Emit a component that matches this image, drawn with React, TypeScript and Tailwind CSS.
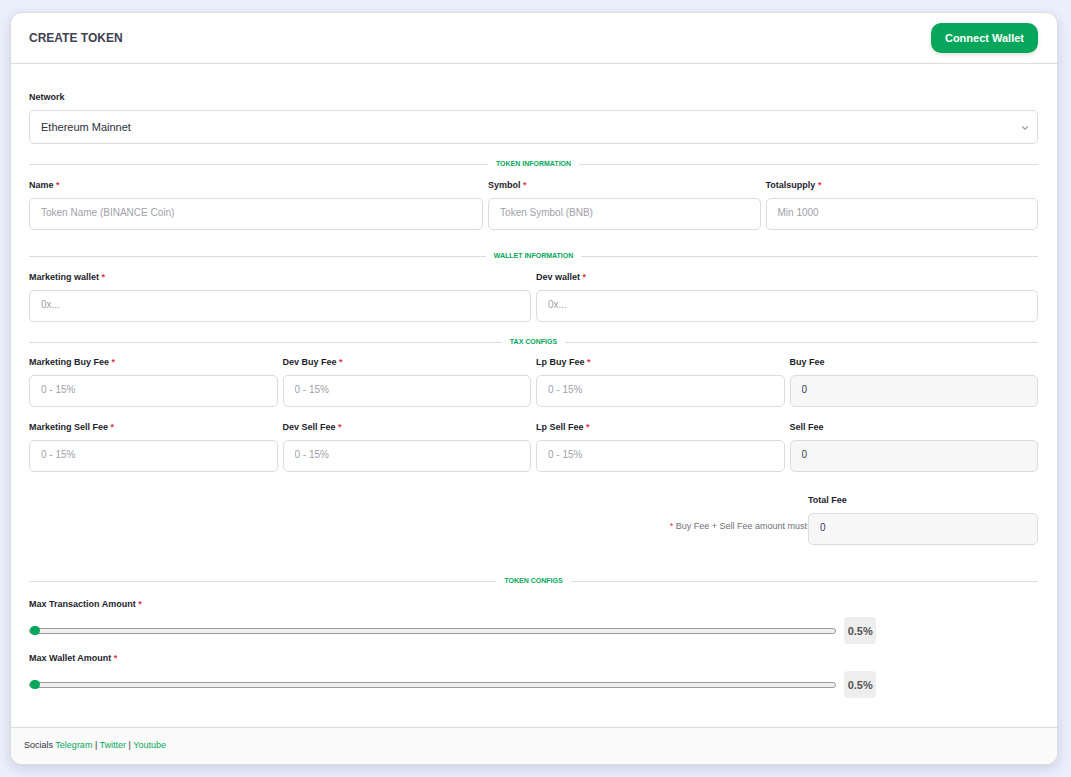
import { useState } from 'react'
import type { ReactNode } from 'react'
import { ChevronDown } from 'lucide-react'

interface FieldProps {
  id: string
  label: string
  placeholder?: string
  required?: boolean
  value?: string
}

function FieldLabel({ id, required, children }: { id: string; required?: boolean; children: ReactNode }) {
  return (
    <label htmlFor={id} className="block mb-1.5 text-[9px] leading-[14px] font-bold text-[#1e1e2d]">
      {children}
      {required && <span className="text-[#dc3545]"> *</span>}
    </label>
  )
}

function Field({ id, label, placeholder, required = true, value }: FieldProps) {
  const readOnly = value !== undefined

  return (
    <div className="min-w-0">
      <FieldLabel id={id} required={required}>{label}</FieldLabel>
      <input
        id={id}
        type="text"
        placeholder={placeholder}
        defaultValue={value}
        readOnly={readOnly}
        className={
          readOnly
            ? 'block w-full h-8 px-[11px] pb-[3px] rounded-[5px] border border-[#dcdcdd] bg-[#f7f7f7] text-[10px] text-[#3b3b46] outline-none'
            : 'block w-full h-8 px-[11px] pb-[3px] rounded-[5px] border border-[#dcdcdd] bg-white text-[10px] text-[#3b3b46] placeholder:text-[#a1a1aa] outline-none focus:border-[#06a75b]'
        }
      />
    </div>
  )
}

function SectionDivider({ title }: { title: string }) {
  return (
    <div className="flex items-center gap-2">
      <div className="h-px flex-1 bg-[#dcdddd]" />
      <h2 className="text-[7px] leading-[10px] font-bold text-[#06a75b] uppercase">{title}</h2>
      <div className="h-px flex-1 bg-[#dcdddd]" />
    </div>
  )
}

function PercentSlider({ id, label }: { id: string; label: string }) {
  const [value, setValue] = useState(0.5)

  return (
    <div>
      <FieldLabel id={id} required>{label}</FieldLabel>
      <div className="flex items-center gap-2">
        <input
          id={id}
          type="range"
          min={0.5}
          max={100}
          step={0.5}
          value={value}
          onChange={(e) => setValue(Number(e.target.value))}
          className="w-4/5 h-1.5 appearance-none rounded-full border border-[#9c9c9c] bg-[#efefef] [&::-webkit-slider-thumb]:appearance-none [&::-webkit-slider-thumb]:w-[10px] [&::-webkit-slider-thumb]:h-[9px] [&::-webkit-slider-thumb]:rounded-full [&::-webkit-slider-thumb]:bg-[#06a75b]"
        />
        <output
          htmlFor={id}
          className="min-w-8 px-[3px] pt-px rounded-[4px] bg-[#eeeeee] text-center text-[11px] leading-[26px] font-bold text-[#555555]"
        >
          {value}%
        </output>
      </div>
    </div>
  )
}

export default function App() {
  return (
    <div className="min-h-screen overflow-hidden bg-[#ebeefb] pl-2.5 pr-[13px] pt-3 pb-3 font-['Liberation_Sans',Arial,sans-serif]">
      <main className="overflow-hidden rounded-xl border border-[#dcdddd] bg-white shadow-[0_4px_12px_rgba(40,40,90,0.15)]">
        <header className="flex items-center justify-between border-b border-[#dcdddd] pl-[18px] pr-[19px] py-2.5">
          <h1 className="text-xs font-bold text-[#3f4254]">CREATE TOKEN</h1>
          <button
            type="button"
            className="h-[30px] px-3.5 rounded-[10px] bg-[#06a75b] text-[11px] font-bold text-white shadow-[0_2px_4px_rgba(0,0,0,0.12)]"
          >
            Connect Wallet
          </button>
        </header>

        <form className="pl-[18px] pr-[19px] pt-[26px] pb-[29px]">
          <div>
            <FieldLabel id="network">Network</FieldLabel>
            <div className="relative">
              <select
                id="network"
                className="block w-full h-[34px] appearance-none rounded-[5px] border border-[#dcdcdd] bg-white px-[11px] text-[11px] text-[#2f2f38] outline-none"
              >
                <option>Ethereum Mainnet</option>
              </select>
              <ChevronDown
                className="pointer-events-none absolute right-2 top-[13px] w-2.5 h-2.5 text-[#a3a3a8]"
                strokeWidth={3}
              />
            </div>
          </div>

          {/* Token information */}
          <div className="mt-[15px]">
            <SectionDivider title="Token Information" />
            <div className="mt-[9px] grid grid-cols-[5fr_3fr_3fr] gap-[5px]">
              <Field id="name" label="Name" placeholder="Token Name (BINANCE Coin)" />
              <Field id="symbol" label="Symbol" placeholder="Token Symbol (BNB)" />
              <Field id="totalsupply" label="Totalsupply" placeholder="Min 1000" />
            </div>
          </div>

          {/* Wallet information */}
          <div className="mt-[21px]">
            <SectionDivider title="Wallet Information" />
            <div className="mt-[9px] grid grid-cols-2 gap-[5px]">
              <Field id="marketing-wallet" label="Marketing wallet" placeholder="0x..." />
              <Field id="dev-wallet" label="Dev wallet" placeholder="0x..." />
            </div>
          </div>

          {/* Tax configs */}
          <div className="mt-[15px]">
            <SectionDivider title="Tax Configs" />
            <div className="mt-2 grid grid-cols-4 gap-x-[5px] gap-y-[13px]">
              <Field id="marketing-buy-fee" label="Marketing Buy Fee" placeholder="0 - 15%" />
              <Field id="dev-buy-fee" label="Dev Buy Fee" placeholder="0 - 15%" />
              <Field id="lp-buy-fee" label="Lp Buy Fee" placeholder="0 - 15%" />
              <Field id="buy-fee" label="Buy Fee" required={false} value="0" />
              <Field id="marketing-sell-fee" label="Marketing Sell Fee" placeholder="0 - 15%" />
              <Field id="dev-sell-fee" label="Dev Sell Fee" placeholder="0 - 15%" />
              <Field id="lp-sell-fee" label="Lp Sell Fee" placeholder="0 - 15%" />
              <Field id="sell-fee" label="Sell Fee" required={false} value="0" />
            </div>
            <div className="mt-[21px] flex items-end justify-end">
              <p className="mr-px pb-3 text-[9px] leading-[14px] text-[#6f6f76]">
                <span className="text-[#dc3545]">*</span> Buy Fee + Sell Fee amount must
              </p>
              <div className="w-[230px]">
                <Field id="total-fee" label="Total Fee" required={false} value="0" />
              </div>
            </div>
          </div>

          {/* Token configs */}
          <div className="mt-[31px]">
            <SectionDivider title="Token Configs" />
            <div className="mt-[11px] flex flex-col gap-[7px]">
              <PercentSlider id="max-transaction" label="Max Transaction Amount" />
              <PercentSlider id="max-wallet" label="Max Wallet Amount" />
            </div>
          </div>
        </form>

        <footer className="border-t border-[#dcdddd] bg-[#fafafa] px-[13px] pt-2.5 pb-3 text-[9px] leading-[14px] text-[#33333d]">
          Socials{' '}
          <a href="#telegram" className="text-[#06a75b]">Telegram</a>
          {' | '}
          <a href="#twitter" className="text-[#06a75b]">Twitter</a>
          {' | '}
          <a href="#youtube" className="text-[#06a75b]">Youtube</a>
        </footer>
      </main>
    </div>
  )
}
